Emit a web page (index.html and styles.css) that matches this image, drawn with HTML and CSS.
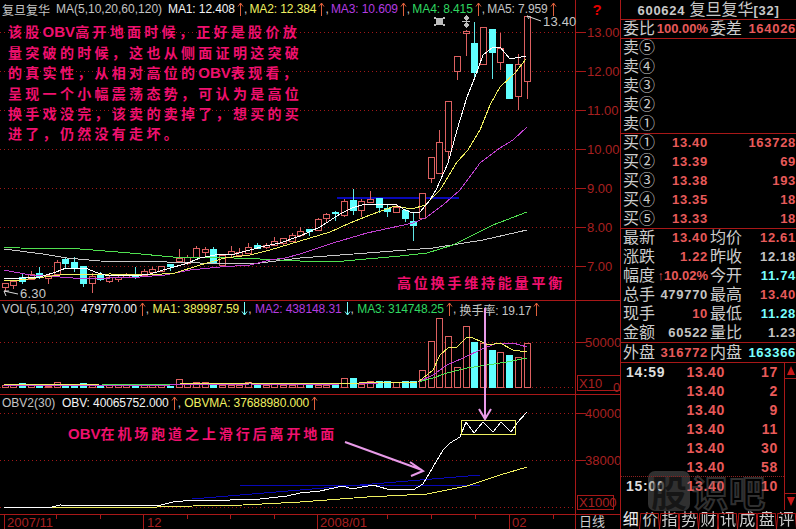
FILE: index.html
```html
<!DOCTYPE html>
<html lang="zh-CN">
<head>
<meta charset="utf-8">
<title>复旦复华 K线</title>
<link rel="stylesheet" href="styles.css">
</head>
<body>
<svg class="sprite" width="0" height="0" aria-hidden="true">
  <symbol id="arrow-up" viewBox="0 0 7 14"><path d="M3.5 1V14M1 4.5L3.5 1L6 4.5"/></symbol>
  <symbol id="arrow-down" viewBox="0 0 7 14"><path d="M3.5 0V13M1 9.5L3.5 13L6 9.5"/></symbol>
</svg>
<div class="app">
  <section class="chart">
    <div class="pane pane-main">
      <svg class="plot" width="620" height="300" viewBox="0 0 620 300">
        <g class="grid">
          <path d="M0 32.5H575M0 71.5H575M0 110.5H575M0 149.5H575M0 188.5H575M0 227.5H575M0 266.5H575"/>
        </g>
        <path class="axis" d="M575.5 0V300M575 32.5H586M575 71.5H586M575 110.5H586M575 149.5H586M575 188.5H586M575 227.5H586M575 266.5H586"/>
        <g class="axis-labels">
          <text x="587" y="37">13.00</text><text x="587" y="76">12.00</text><text x="587" y="115">11.00</text>
          <text x="587" y="154">10.00</text><text x="587" y="193">9.00</text><text x="587" y="232">8.00</text><text x="587" y="271">7.00</text>
        </g>
        <polyline class="ln blue thick" points="337,198 459,198"/>
        <g id="candles"></g>
        <polyline class="ln gray" points="4,249 43,254 67,258 100,261 167,262 200,263 260,263 300,258 367,253 433,248 483,240 527,230"/>
        <polyline class="ln green" points="4,247 20,248 80,249 130,253 173,257 207,257 260,259 300,261 333,262 400,256 427,253 453,245 493,225 527,212"/>
        <polyline class="ln purple" points="4,270 30,275 60,277 85,279 110,278 140,277 165,275 190,270 220,267 250,265 270,260 285,258 300,254 333,243 367,233 413,223 427,217 443,205 460,190 480,163 500,148 513,140 527,127"/>
        <polyline class="ln yellow" points="4,280 20,280 60,275 110,274 150,275 175,273 200,265 225,258 250,255 270,250 300,241 330,232 350,223 370,215 395,206 412,209 425,205 440,190 457,162 468,150 480,130 490,105 500,87 515,73 526,59"/>
        <polyline class="ln white" points="4,278 22,278 40,277 56,272 66,268 75,268 88,269 95,272 105,275 120,275 135,276 150,274 170,268 185,264 200,258 215,255 235,254 250,250 265,246 280,243 300,236 320,227 340,214 352,208 365,204 395,204 405,210 413,213 420,212 430,200 436,190 448,163 457,130 467,97 475,77 483,55 493,47 500,47 510,59 526,56"/>
        <path class="pointer" d="M527 16L541 21M527 16l3 1M527 16l2 3M4 291L18 294M4 291l2 5M4 291h5"/>
        <text class="price-tag" x="543" y="26">13.40</text>
        <text class="price-tag" x="20" y="298">6.30</text>
        <g class="marks">
          <path d="M436 18h7v7h-7zM434 17h2v2h-2zM443 17h2v2h-2zM434 24h2v2h-2zM443 24h2v2h-2z"/>
          <path d="M466 15l3 3-3 3-3-3zM466 22l3 3-3 3-3-3zM462 21h8v1h-8z"/>
        </g>
      </svg>
      <div class="head">
        <span class="t-gray sym">复旦复华</span>
        <span class="t-gray name">MA(5,10,20,60,120)</span>
        <span class="t-white val">MA1: 12.408</span><svg class="ar up"><use href="#arrow-up"/></svg><span class="comma">,</span>
        <span class="t-yellow val">MA2: 12.384</span><svg class="ar up"><use href="#arrow-up"/></svg><span class="comma">,</span>
        <span class="t-purple val">MA3: 10.609</span><svg class="ar up"><use href="#arrow-up"/></svg><span class="comma">,</span>
        <span class="t-green val">MA4: 8.415</span><svg class="ar up"><use href="#arrow-up"/></svg><span class="comma">,</span>
        <span class="t-gray val">MA5: 7.959</span><svg class="ar up"><use href="#arrow-up"/></svg>
        <span class="help">?</span>
      </div>
    </div>

    <div class="pane pane-vol">
      <svg class="plot" width="620" height="93" viewBox="0 301 620 93">
        <path class="grid-line" d="M0 342.5H575M0 387.5H575"/>
        <path class="axis" d="M575.5 301V394M575 342.5H586"/>
        <rect class="axis-box" x="577.5" y="375.5" width="44" height="15"/>
        <g class="axis-labels">
          <text x="585" y="347">50000</text><text x="579" y="388">X10</text><text x="613" y="392">0</text>
        </g>
        <g id="volume"></g>
        <polyline class="ln green" points="4,385 100,384 200,385 300,385 418,382 433,378 447,373 467,368 487,365 507,362 527,358"/>
        <polyline class="ln purple" points="4,386 170,385 250,384 300,385 418,382 433,375 447,365 463,358 480,350 497,343 513,343 527,347"/>
        <polyline class="ln yellow" points="4,385 100,384 180,384 250,383 300,384 418,382 433,370 440,355 448,348 457,347 467,337 473,338 482,342 488,345 500,343 513,350 527,352"/>
      </svg>
      <div class="head head-sub">
        <span class="t-gray name-vol">VOL(5,10,20)</span>
        <span class="t-white val">479770.00</span><svg class="ar up"><use href="#arrow-up"/></svg><span class="comma">,</span>
        <span class="t-yellow val">MA1: 389987.59</span><svg class="ar down"><use href="#arrow-down"/></svg><span class="comma">,</span>
        <span class="t-purple val">MA2: 438148.31</span><svg class="ar down"><use href="#arrow-down"/></svg><span class="comma">,</span>
        <span class="t-green val">MA3: 314748.25</span><svg class="ar up"><use href="#arrow-up"/></svg><span class="comma">,</span>
        <span class="t-gray val">换手率: 19.17</span><svg class="ar up"><use href="#arrow-up"/></svg>
      </div>
    </div>

    <div class="pane pane-obv">
      <svg class="plot" width="620" height="119" viewBox="0 395 620 119">
        <path class="grid-line" d="M0 413.5H575M0 460.5H575M0 507.5H575"/>
        <path class="axis" d="M575.5 395V514M575 413.5H586M575 460.5H586"/>
        <rect class="axis-box" x="577.5" y="495.5" width="36" height="14"/>
        <g class="axis-labels">
          <text x="585" y="418">40000</text><text x="585" y="465">38000</text><text x="579" y="507">X1000</text>
        </g>
        <polyline class="ln blue" points="192,499 300,490 480,475"/>
        <polyline class="ln blue" points="240,485 480,485"/>
        <polyline class="ln yellow" points="4,507 157,507 193,506 243,505 300,502 367,497 427,494 467,486 500,475 527,467"/>
        <polyline class="ln white" points="4,507 52,507 60,505 157,506 173,502 193,500 217,501 243,499 260,499 287,496 300,493 320,491 343,486 352,489 373,485 387,489 413,490 423,484 433,467 443,450 450,443 460,437 466,422 474,433 483,422 493,432 501,422 511,432 517,423 527,412"/>
        <rect class="ln yellow box" x="461.5" y="420.5" width="54" height="14"/>
      </svg>
      <div class="head head-sub">
        <span class="t-gray name-obv">OBV2(30)</span>
        <span class="t-white val">OBV: 40065752.000</span><svg class="ar up"><use href="#arrow-up"/></svg><span class="comma">,</span>
        <span class="t-yellow val">OBVMA: 37688980.000</span><svg class="ar up"><use href="#arrow-up"/></svg>
      </div>
    </div>

    <div class="dates">
      <svg class="date-axis" width="575" height="14" viewBox="0 515 575 14">
        <path class="axis" d="M4.5 515V529M143.5 515V529M317.5 515V529M509.5 515V529M56.5 515V519M100.5 515V519M187.5 515V519M230.5 515V519M274.5 515V519M387.5 515V519M431.5 515V519M475.5 515V519M553.5 515V519"/>
        <g class="axis-labels">
          <text x="7" y="527">2007/11</text><text x="147" y="527">12</text><text x="320" y="527">2008/01</text><text x="512" y="527">02</text>
        </g>
      </svg>
      <span class="period">日线</span>
    </div>

    <svg class="arrows" width="575" height="514" viewBox="0 0 575 514">
      <path d="M485 308V417M479 409L485 419L491 409" />
      <path d="M345 442L422 470M410 462L423 471L411 476" />
    </svg>

    <p class="note note-main">该股<span class="latin">OBV</span>高开地面时候&#xFF0C;正好是股价放<br>量突破的时候&#xFF0C;这也从侧面证明这突破<br>的真实性&#xFF0C;从相对高位的<span class="latin">OBV</span>表现看&#xFF0C;<br>呈现一个小幅震荡态势&#xFF0C;可认为是高位<br>换手戏没完&#xFF0C;该卖的卖掉了&#xFF0C;想买的买<br>进了&#xFF0C;仍然没有走坏&#x3002;</p>
    <p class="note note-balance">高位换手维持能量平衡</p>
    <p class="note note-runway"><span class="latin">OBV</span>在机场跑道之上滑行后离开地面</p>
  </section>

  <aside class="panel">
    <div class="title"><b>600624</b> 复旦复华<b>[32]</b></div>
    <div class="grid4 ratio">
      <span>委比</span><b class="red wide">100.00%</b><span>委差</span><b class="red">164026</b>
    </div>
    <div class="book sell">
      <span>卖⑤</span><span>卖④</span><span>卖③</span><span>卖②</span><span>卖①</span>
    </div>
    <div class="book buy">
      <span>买①</span><b class="red">13.40</b><b class="red">163728</b>
      <span>买②</span><b class="red">13.39</b><b class="red">69</b>
      <span>买③</span><b class="red">13.38</b><b class="red">193</b>
      <span>买④</span><b class="red">13.35</b><b class="red">18</b>
      <span>买⑤</span><b class="red">13.33</b><b class="red">18</b>
    </div>
    <div class="grid4 quote">
      <span>最新</span><b class="red">13.40</b><span>均价</span><b class="red">12.61</b>
      <span>涨跌</span><b class="red">1.22</b><span>昨收</span><b class="gray">12.18</b>
      <span>幅度</span><b class="red wide">↑10.02%</b><span>今开</span><b class="cyan">11.74</b>
      <span>总手</span><b class="gray">479770</b><span>最高</span><b class="red">13.40</b>
      <span>现手</span><b class="red">10</b><span>最低</span><b class="cyan">11.28</b>
      <span>金额</span><b class="gray">60522</b><span>量比</span><b class="gray">1.23</b>
    </div>
    <div class="grid4 outer">
      <span>外盘</span><b class="red">316772</b><span>内盘</span><b class="cyan">163366</b>
    </div>
    <div class="trades">
      <div class="trade-list">
        <b class="time">14:59</b><b class="red">13.40</b><b class="red">17</b>
        <i></i><b class="red">13.40</b><b class="red">2</b>
        <i></i><b class="red">13.40</b><b class="red">9</b>
        <i></i><b class="red">13.40</b><b class="red">11</b>
        <i></i><b class="red">13.40</b><b class="red">30</b>
        <i></i><b class="red">13.40</b><b class="red">58</b>
        <b class="time">15:00</b><b class="red">13.40</b><b class="red">10</b>
      </div>
      <div class="scroll"><span class="tri-up"></span><span class="tri-down"></span></div>
      <div class="watermark"><span class="wm-box">股</span><span class="wm-text">识吧</span></div>
    </div>
    <nav class="tabs">
      <span class="on">细</span><span>价</span><span>指</span><span>势</span><span>财</span><span>讯</span><span>成</span><span>盘</span><span>评</span>
    </nav>
  </aside>
</div>
<script src="chart.js"></script>
</body>
</html>
```

FILE: styles.css
```css
* { box-sizing: border-box; }
html, body { margin: 0; padding: 0; background: #000; }
body { width: 796px; height: 529px; overflow: hidden; font-family: "Liberation Sans", "Noto Sans CJK SC", sans-serif; color: #ccc; }
.sprite { position: absolute; }
.app { display: grid; grid-template-columns: 621px 175px; height: 529px; }

/* chart column */
.chart { position: relative; display: flex; flex-direction: column; height: 529px; border-right: 1px solid #a81818; overflow: hidden; }
.pane { position: relative; flex: none; border-bottom: 1px solid #a81818; }
.pane-main { height: 301px; }
.pane-vol { height: 94px; }
.pane-obv { height: 120px; }
.plot { position: absolute; left: 0; top: 0; display: block; overflow: visible; }
.head { position: relative; display: flex; align-items: center; height: 18px; padding-left: 2px; font-size: 12px; white-space: nowrap; }
.head > * { flex: none; }
.head-sub { height: 16px; }
.sym { width: 54px; }
.name { width: 112px; }
.name-vol { width: 79px; }
.name-obv { width: 60px; }
.val { letter-spacing: -.1px; }
.ar { width: 7px; height: 14px; margin-left: 2px; fill: none; stroke: currentColor; }
.up { color: #e0603c; }
.down { color: #7ff; }
.comma { width: 5.5px; color: #ccc; }
.head-sub .comma { width: 6.7px; }
.help { margin-left: 36px; font-size: 15px; font-weight: 700; color: #e00000; }
.t-gray { color: #c4c4c4; }
.t-white { color: #f4f4f4; }
.t-yellow { color: #f0f060; }
.t-purple { color: #b43ce0; }
.t-green { color: #30d860; }

/* svg plot */
.grid path, .grid-line { fill: none; stroke: #a01818; stroke-dasharray: 1 3; }
.axis { fill: none; stroke: #a81818; shape-rendering: crispEdges; }
.axis-box { fill: none; stroke: #a81818; shape-rendering: crispEdges; }
.axis-labels text { font-size: 13px; fill: #a82020; }
.ln { fill: none; shape-rendering: crispEdges; stroke-width: 1; }
.ln.white { stroke: #fff; }
.ln.yellow { stroke: #f0f060; }
.ln.purple { stroke: #c040d0; }
.ln.green { stroke: #50e050; }
.ln.gray { stroke: #c8c8c8; }
.ln.blue { stroke: #0808b8; }
.ln.blue.thick { stroke-width: 2; }
.ln.box { stroke: #f0f060; }
.pointer { fill: none; stroke: #d8d8d8; }
.price-tag { font-size: 13px; letter-spacing: .2px; fill: #c8c8c8; }
.marks path { fill: #bdbdbd; shape-rendering: crispEdges; }
.c-up { fill: #000; stroke: #dc6060; shape-rendering: crispEdges; }
.c-down { fill: #60ffff; stroke: #60ffff; shape-rendering: crispEdges; }
.wick-up { stroke: #dc6060; shape-rendering: crispEdges; }
.wick-down { stroke: #60e8e8; shape-rendering: crispEdges; }

/* date row */
.dates { flex: 1; display: flex; min-height: 0; }
.date-axis { display: block; flex: none; }
.period { flex: 1; display: block; padding-left: 3px; border-left: 1px solid #a81818; font-size: 13px; line-height: 14px; color: #ccc; }

/* callouts */
.arrows { position: absolute; left: 0; top: 0; }
.arrows path { fill: none; stroke: #e89ae8; stroke-width: 2; }
.note { position: absolute; margin: 0; font-family: "Noto Sans CJK SC", sans-serif; font-size: 14px; font-weight: 700; line-height: 20px; letter-spacing: 3.3px; color: #f0106e; white-space: nowrap; }
.latin { font-family: "Liberation Sans", sans-serif; font-size: 15px; letter-spacing: 0; }
.note-main { left: 8px; top: 21px; }
.note-balance { left: 397px; top: 272px; letter-spacing: 2.8px; }
.note-runway { left: 68px; top: 423px; letter-spacing: 2.9px; }

/* quote panel */
.panel { display: flex; flex-direction: column; height: 529px; font-size: 16px; line-height: 18px; white-space: nowrap; overflow: hidden; }
.panel b { font-size: 13px; font-weight: 700; letter-spacing: .7px; }
.panel > div { flex: none; box-sizing: content-box; border-bottom: 1px solid #a81818; }
.red { color: #e85a5a; }
.gray { color: #c4c4c4; }
.cyan { color: #7ff; }
.title { height: 19px; line-height: 19px; text-align: center; color: #c8c8c8; }
.grid4, .book { display: grid; align-items: center; padding-left: 2px; }
.grid4 { grid-template-columns: 32px 53px 34px 54px; grid-auto-rows: 1fr; }
.grid4 b { text-align: right; }
.grid4 span:nth-of-type(even) { text-align: right; }
.wide { letter-spacing: 0 !important; }
.ratio { height: 18px; }
.book { grid-template-rows: repeat(5, 1fr); height: 94px; }
.sell { grid-template-columns: 1fr; }
.buy { grid-template-columns: 32px 53px 88px; }
.buy b { text-align: right; }
.quote { height: 113px; }
.outer { height: 19px; }
.trades { position: relative; display: flex; height: 147px; border-bottom: none !important; }
.trades::after { content: ""; position: absolute; left: 0; right: 12px; top: 113px; border-top: 1px dotted #8a2020; }
.trade-list { flex: 1; display: grid; grid-template-columns: 40px 59px 53px; grid-auto-rows: 19px; align-items: center; align-content: start; padding-left: 5px; }
.trade-list b { font-size: 14px; text-align: right; height: 19px; line-height: 19px; }
.trade-list b.time { text-align: left; color: #ddd; }
.trade-list i { display: block; }
.scroll { position: relative; flex: none; width: 12px; border-left: 1px solid #a81818; }
.scroll span { display: flex; width: 100%; height: 16px; border-bottom: 1px solid #a81818; align-items: center; justify-content: center; }
.scroll span::before { content: ""; border-left: 4px solid transparent; border-right: 4px solid transparent; }
.tri-up::before { border-bottom: 9px solid #c81818; }
.tri-down { position: absolute; bottom: 1px; border-top: 1px solid #a81818; border-bottom: none !important; }
.tri-down::before { border-top: 9px solid #c81818; }
.watermark { position: absolute; left: 27px; top: 108px; display: flex; align-items: center; height: 40px; font-family: "Noto Sans CJK SC", sans-serif; font-weight: 700; font-size: 36px; line-height: 40px; pointer-events: none; }
.wm-box { width: 42px; height: 40px; border-radius: 7px; background: rgba(120, 120, 120, .4); color: rgba(0, 0, 0, .55); text-align: center; }
.wm-text { margin-left: 2px; color: transparent; -webkit-text-stroke: 2px rgba(110, 110, 110, .45); letter-spacing: 1px; }
.tabs { flex: none; display: flex; height: 19px; line-height: 19px; }
.tabs span { position: relative; flex: 1; text-align: center; color: #ccc; }
.tabs span::before { content: ""; position: absolute; inset: 0 -1px 0 -1px; border: 1px solid #c01818; border-bottom: none; transform: perspective(30px) rotateX(14deg); transform-origin: bottom; }
.tabs span.on { color: #eee; }
.tabs span.on::before { display: none; }
```

FILE: chart.js
```js
// One row per trading day: [high, bodyTop, bodyBottom, low, "r" up / "c" down, volumeTop]
var days = [
  [283,283,287,292,"r",385],[280,281,285,289,"r",385],[274,277,281,284,"c",383],[271,274,279,279,"r",385],
  [267,273,277,279,"c",385],[275,275,278,284,"r",386],[260,262,274,274,"r",382],[257,259,263,268,"c",384],
  [257,262,267,272,"c",385],[266,266,283,287,"c",383],[273,276,283,293,"r",385],[272,275,279,281,"c",385],
  [276,277,281,283,"r",385],[276,277,279,282,"r",384],[273,275,277,278,"r",385],[267,274,277,279,"c",385],
  [269,271,275,277,"r",385],[267,269,272,274,"r",385],[266,266,271,272,"r",385],[264,264,266,271,"c",386],
  [249,258,261,263,"r",379],[255,257,263,265,"r",383],[246,248,257,257,"r",382],[247,249,252,256,"r",382],
  [247,249,262,264,"c",384],[255,255,265,267,"r",385],[246,251,254,257,"r",385],[248,252,255,257,"r",385],
  [243,247,253,253,"r",382],[243,245,248,248,"c",385],[243,245,247,249,"r",385],[237,241,245,246,"r",384],
  [238,238,243,245,"r",385],[233,235,241,241,"r",385],[227,231,235,237,"r",383],[229,229,231,236,"c",385],
  [218,219,230,230,"r",385],[213,214,218,223,"r",385],[211,212,213,221,"c",385],[199,201,215,217,"r",378],
  [189,200,210,215,"c",378],[199,201,210,217,"r",384],[191,199,202,202,"r",381],[198,198,207,213,"c",381],
  [205,208,211,217,"c",381],[205,207,212,212,"r",382],[209,210,218,222,"c",381],[213,221,225,241,"c",381],
  [193,193,218,218,"r",370],[157,157,178,183,"r",341],[130,142,173,173,"r",318],[101,101,151,162,"r",336],
  [56,56,71,80,"r",367],[30,31,33,56,"r",326],[22,43,72,80,"c",342],[27,27,64,64,"r",343],
  [29,29,52,79,"c",350],[33,48,62,70,"r",352],[64,64,98,98,"c",355],[54,64,96,110,"r",357],
  [16,16,81,99,"r",343]
];

var NS = "http://www.w3.org/2000/svg";

function add(parent, tag, attrs) {
  var el = document.createElementNS(NS, tag);
  Object.keys(attrs).forEach(function (k) { el.setAttribute(k, attrs[k]); });
  parent.appendChild(el);
}

var candles = document.getElementById("candles");
var volume = document.getElementById("volume");
var BASE = 387;

days.forEach(function (d, i) {
  var x = Math.round(4.5 + 8.7 * i);
  var up = d[4] === "r";
  add(candles, "path", { class: up ? "wick-up" : "wick-down", d: "M" + (x + 0.5) + " " + d[0] + "V" + d[3] });
  add(candles, "rect", { class: up ? "c-up" : "c-down", x: x - 2.5, y: d[1] + 0.5, width: 6, height: Math.max(d[2] - d[1], 1) });
  add(volume, "rect", { class: up ? "c-up" : "c-down", x: x - 2.5, y: d[5] + 0.5, width: 6, height: BASE - d[5] });
});
```
